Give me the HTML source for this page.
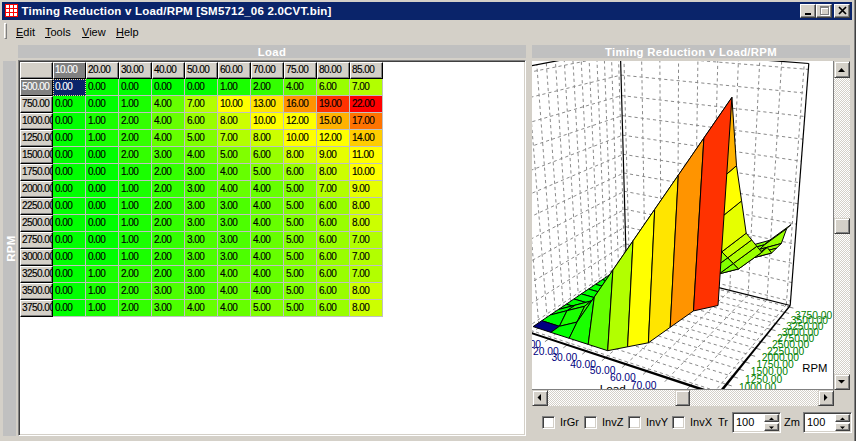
<!DOCTYPE html>
<html lang="en"><head><meta charset="utf-8"><title>Timing Reduction v Load/RPM</title>
<style>
html,body{margin:0;padding:0;background:#fff;}
body{width:857px;height:444px;overflow:hidden;position:relative;font-family:"Liberation Sans",sans-serif;font-size:11px;color:#000;}
#win{position:absolute;left:0;top:0;width:855px;height:441px;background:#d4d0c8;border-right:1px solid #404040;box-shadow:inset -1px 0 0 #808080;}
#win div{position:absolute;box-sizing:border-box;}
#title{left:2px;top:2px;width:850px;height:18px;background:#0a246a;color:#fff;font-weight:bold;}
#ticon{position:absolute;left:3px;top:2px;}
#ttext{position:absolute;left:19.5px;top:3px;font-size:11.5px;letter-spacing:0.2px;line-height:13px;white-space:nowrap;}
.cb{top:2px;width:16px;height:14px;background:#d4d0c8;border:1px solid;border-color:#fff #404040 #404040 #fff;box-shadow:inset -1px -1px 0 #808080;}
.cb svg{position:absolute;left:2px;top:1px;}
#grip{left:4px;top:23px;width:3px;height:16px;border:1px solid;border-color:#fff #808080 #808080 #fff;}
.mi{top:25px;height:14px;line-height:14px;font-size:11px;white-space:nowrap;}
.bar{background:#c0c0c0;color:#fff;font-weight:bold;font-size:11.3px;letter-spacing:0.33px;line-height:15px;text-align:center;overflow:hidden;}
#rpmbar{left:3px;top:61px;width:13px;height:375px;background:#c0c0c0;}
#rpmbar span{position:absolute;left:-7px;top:181px;width:31px;height:13px;line-height:13px;text-align:center;color:#fff;font-weight:bold;font-size:11.5px;letter-spacing:0.3px;transform:rotate(-90deg);}
#grid{left:18px;top:60px;width:508px;height:376px;background:#fff;border:1px solid;border-color:#808080 #fff #fff #808080;box-shadow:inset 1px 1px 0 #404040,inset -1px -1px 0 #d4d0c8;}
#grid div{font-size:10px;letter-spacing:-0.55px;line-height:15px;-webkit-text-stroke:0.15px;white-space:nowrap;overflow:hidden;}
#grid .fx{margin:1px 0 0 1px;width:33px;height:17px;background:#d4d0c8;border:1px solid;border-color:#fff #000 #000 #fff;box-shadow:inset -1px -1px 0 #808080;padding-left:1px;line-height:13px;}
#grid .fx.sel{background:#808080;color:#fff;}
#grid .c{margin:1px 0 0 1px;width:33px;height:17px;border-right:1px solid #c0c0c0;border-bottom:1px solid #c0c0c0;padding-left:2px;}
#grid .c.cur{background:#0a246a;color:#fff;border:1px dotted #f5db95;padding-left:1px;line-height:13px;}
#chart{left:532px;top:61px;width:302px;height:329px;background:#fff;overflow:hidden;border-right:1px solid #808080;border-bottom:1px solid #808080;}
.sb{background-color:#eae8e3;background-image:linear-gradient(45deg,#fff 25%,transparent 25%,transparent 75%,#fff 75%),linear-gradient(45deg,#fff 25%,#d4d0c8 25%,#d4d0c8 75%,#fff 75%);background-size:2px 2px;background-position:0 0,1px 1px;}
#vsb{left:834px;top:61px;width:16px;height:329px;}
#hsb{left:532px;top:390px;width:302px;height:16px;}
.btn{width:16px;height:16px;background:#d4d0c8;border:1px solid;border-color:#d4d0c8 #404040 #404040 #d4d0c8;box-shadow:inset 1px 1px 0 #fff,inset -1px -1px 0 #808080;}
.btn svg{position:absolute;left:-1px;top:-1px;}
.chk{top:416px;width:13px;height:13px;background:#fff;border:1px solid;border-color:#808080 #fff #fff #808080;box-shadow:inset 1px 1px 0 #404040,inset -1px -1px 0 #d4d0c8;}
.lab{top:415px;height:14px;line-height:14px;font-size:11px;white-space:nowrap;}
.spin{top:412px;width:49px;height:21px;background:#fff;border:1px solid;border-color:#808080 #fff #fff #808080;box-shadow:inset 1px 1px 0 #404040,inset -1px -1px 0 #d4d0c8;}
.spin span{position:absolute;left:3px;top:3px;line-height:13px;font-size:11px;}
.sbt{left:31px;margin-top:1px;width:15px;height:8px;background:#d4d0c8;border:1px solid;border-color:#fff #404040 #404040 #fff;box-shadow:inset -1px -1px 0 #808080;}
.sbt svg{position:absolute;left:1px;top:1px;}
</style></head>
<body>
<div id="win">
<div id="title"><svg id="ticon" width="13" height="13" viewBox="0 0 13 13"><rect width="13" height="13" fill="#f00"/><g fill="#fff"><rect x="1" y="1" width="3" height="3"/><rect x="5" y="1" width="3" height="3"/><rect x="9" y="1" width="3" height="3"/><rect x="1" y="5" width="3" height="3"/><rect x="5" y="5" width="3" height="3"/><rect x="9" y="5" width="3" height="3"/><rect x="1" y="9" width="3" height="3"/><rect x="5" y="9" width="3" height="3"/><rect x="9" y="9" width="3" height="3"/></g></svg><span id="ttext">Timing Reduction v Load/RPM [SM5712_06 2.0CVT.bin]</span><div class="cb" style="left:798px"><svg width="12" height="10"><rect x="2" y="7" width="6" height="2" fill="#000"/></svg></div><div class="cb" style="left:814px"><svg width="12" height="10"><rect x="2.5" y="1.5" width="8" height="8" fill="none" stroke="#fff"/><rect x="2" y="1" width="9" height="2" fill="#fff"/><rect x="1.5" y="0.5" width="8" height="8" fill="none" stroke="#808080"/><rect x="1" y="0" width="9" height="2" fill="#808080"/></svg></div><div class="cb" style="left:832px"><svg width="12" height="10"><path d="M2 1 L9 8 M9 1 L2 8" stroke="#000" stroke-width="1.7" fill="none"/></svg></div></div>
<div id="grip"></div>
<div class="mi" style="left:16px"><u>E</u>dit</div><div class="mi" style="left:45px"><u>T</u>ools</div><div class="mi" style="left:82px"><u>V</u>iew</div><div class="mi" style="left:116px"><u>H</u>elp</div>
<div class="bar" style="left:18px;top:45px;width:508px;height:13px">Load</div>
<div class="bar" style="left:532px;top:45px;width:318px;height:13px">Timing Reduction v Load/RPM</div>
<div id="rpmbar"><span>RPM</span></div>
<div id="grid">
<div class="fx" style="left:0;top:0"></div><div class="fx sel" style="left:33px;top:0">10.00</div><div class="fx" style="left:66px;top:0">20.00</div><div class="fx" style="left:99px;top:0">30.00</div><div class="fx" style="left:132px;top:0">40.00</div><div class="fx" style="left:165px;top:0">50.00</div><div class="fx" style="left:198px;top:0">60.00</div><div class="fx" style="left:231px;top:0">70.00</div><div class="fx" style="left:264px;top:0">75.00</div><div class="fx" style="left:297px;top:0">80.00</div><div class="fx" style="left:330px;top:0">85.00</div>
<div class="fx sel" style="left:0;top:17px">500.00</div><div class="c cur" style="left:33px;top:17px">0.00</div><div class="c" style="left:66px;top:17px;background:#00ff00">0.00</div><div class="c" style="left:99px;top:17px;background:#00ff00">0.00</div><div class="c" style="left:132px;top:17px;background:#00ff00">0.00</div><div class="c" style="left:165px;top:17px;background:#00ff00">0.00</div><div class="c" style="left:198px;top:17px;background:#1aff00">1.00</div><div class="c" style="left:231px;top:17px;background:#33ff00">2.00</div><div class="c" style="left:264px;top:17px;background:#66ff00">4.00</div><div class="c" style="left:297px;top:17px;background:#99ff00">6.00</div><div class="c" style="left:330px;top:17px;background:#b2ff00">7.00</div>
<div class="fx" style="left:0;top:34px">750.00</div><div class="c" style="left:33px;top:34px;background:#00ff00">0.00</div><div class="c" style="left:66px;top:34px;background:#00ff00">0.00</div><div class="c" style="left:99px;top:34px;background:#1aff00">1.00</div><div class="c" style="left:132px;top:34px;background:#66ff00">4.00</div><div class="c" style="left:165px;top:34px;background:#b2ff00">7.00</div><div class="c" style="left:198px;top:34px;background:#ffff00">10.00</div><div class="c" style="left:231px;top:34px;background:#ffe500">13.00</div><div class="c" style="left:264px;top:34px;background:#ff9400">16.00</div><div class="c" style="left:297px;top:34px;background:#ff3200">19.00</div><div class="c" style="left:330px;top:34px;background:#ff0000">22.00</div>
<div class="fx" style="left:0;top:51px">1000.00</div><div class="c" style="left:33px;top:51px;background:#00ff00">0.00</div><div class="c" style="left:66px;top:51px;background:#1aff00">1.00</div><div class="c" style="left:99px;top:51px;background:#33ff00">2.00</div><div class="c" style="left:132px;top:51px;background:#66ff00">4.00</div><div class="c" style="left:165px;top:51px;background:#99ff00">6.00</div><div class="c" style="left:198px;top:51px;background:#ccff00">8.00</div><div class="c" style="left:231px;top:51px;background:#ffff00">10.00</div><div class="c" style="left:264px;top:51px;background:#ffff00">12.00</div><div class="c" style="left:297px;top:51px;background:#ffb200">15.00</div><div class="c" style="left:330px;top:51px;background:#ff7300">17.00</div>
<div class="fx" style="left:0;top:68px">1250.00</div><div class="c" style="left:33px;top:68px;background:#00ff00">0.00</div><div class="c" style="left:66px;top:68px;background:#1aff00">1.00</div><div class="c" style="left:99px;top:68px;background:#33ff00">2.00</div><div class="c" style="left:132px;top:68px;background:#66ff00">4.00</div><div class="c" style="left:165px;top:68px;background:#80ff00">5.00</div><div class="c" style="left:198px;top:68px;background:#b2ff00">7.00</div><div class="c" style="left:231px;top:68px;background:#ccff00">8.00</div><div class="c" style="left:264px;top:68px;background:#ffff00">10.00</div><div class="c" style="left:297px;top:68px;background:#ffff00">12.00</div><div class="c" style="left:330px;top:68px;background:#ffcc00">14.00</div>
<div class="fx" style="left:0;top:85px">1500.00</div><div class="c" style="left:33px;top:85px;background:#00ff00">0.00</div><div class="c" style="left:66px;top:85px;background:#00ff00">0.00</div><div class="c" style="left:99px;top:85px;background:#33ff00">2.00</div><div class="c" style="left:132px;top:85px;background:#4cff00">3.00</div><div class="c" style="left:165px;top:85px;background:#66ff00">4.00</div><div class="c" style="left:198px;top:85px;background:#80ff00">5.00</div><div class="c" style="left:231px;top:85px;background:#99ff00">6.00</div><div class="c" style="left:264px;top:85px;background:#ccff00">8.00</div><div class="c" style="left:297px;top:85px;background:#e6ff00">9.00</div><div class="c" style="left:330px;top:85px;background:#ffff00">11.00</div>
<div class="fx" style="left:0;top:102px">1750.00</div><div class="c" style="left:33px;top:102px;background:#00ff00">0.00</div><div class="c" style="left:66px;top:102px;background:#00ff00">0.00</div><div class="c" style="left:99px;top:102px;background:#1aff00">1.00</div><div class="c" style="left:132px;top:102px;background:#33ff00">2.00</div><div class="c" style="left:165px;top:102px;background:#4cff00">3.00</div><div class="c" style="left:198px;top:102px;background:#66ff00">4.00</div><div class="c" style="left:231px;top:102px;background:#80ff00">5.00</div><div class="c" style="left:264px;top:102px;background:#99ff00">6.00</div><div class="c" style="left:297px;top:102px;background:#ccff00">8.00</div><div class="c" style="left:330px;top:102px;background:#ffff00">10.00</div>
<div class="fx" style="left:0;top:119px">2000.00</div><div class="c" style="left:33px;top:119px;background:#00ff00">0.00</div><div class="c" style="left:66px;top:119px;background:#00ff00">0.00</div><div class="c" style="left:99px;top:119px;background:#1aff00">1.00</div><div class="c" style="left:132px;top:119px;background:#33ff00">2.00</div><div class="c" style="left:165px;top:119px;background:#4cff00">3.00</div><div class="c" style="left:198px;top:119px;background:#66ff00">4.00</div><div class="c" style="left:231px;top:119px;background:#66ff00">4.00</div><div class="c" style="left:264px;top:119px;background:#80ff00">5.00</div><div class="c" style="left:297px;top:119px;background:#b2ff00">7.00</div><div class="c" style="left:330px;top:119px;background:#e6ff00">9.00</div>
<div class="fx" style="left:0;top:136px">2250.00</div><div class="c" style="left:33px;top:136px;background:#00ff00">0.00</div><div class="c" style="left:66px;top:136px;background:#00ff00">0.00</div><div class="c" style="left:99px;top:136px;background:#1aff00">1.00</div><div class="c" style="left:132px;top:136px;background:#33ff00">2.00</div><div class="c" style="left:165px;top:136px;background:#4cff00">3.00</div><div class="c" style="left:198px;top:136px;background:#4cff00">3.00</div><div class="c" style="left:231px;top:136px;background:#66ff00">4.00</div><div class="c" style="left:264px;top:136px;background:#80ff00">5.00</div><div class="c" style="left:297px;top:136px;background:#99ff00">6.00</div><div class="c" style="left:330px;top:136px;background:#ccff00">8.00</div>
<div class="fx" style="left:0;top:153px">2500.00</div><div class="c" style="left:33px;top:153px;background:#00ff00">0.00</div><div class="c" style="left:66px;top:153px;background:#00ff00">0.00</div><div class="c" style="left:99px;top:153px;background:#1aff00">1.00</div><div class="c" style="left:132px;top:153px;background:#33ff00">2.00</div><div class="c" style="left:165px;top:153px;background:#4cff00">3.00</div><div class="c" style="left:198px;top:153px;background:#4cff00">3.00</div><div class="c" style="left:231px;top:153px;background:#66ff00">4.00</div><div class="c" style="left:264px;top:153px;background:#80ff00">5.00</div><div class="c" style="left:297px;top:153px;background:#99ff00">6.00</div><div class="c" style="left:330px;top:153px;background:#ccff00">8.00</div>
<div class="fx" style="left:0;top:170px">2750.00</div><div class="c" style="left:33px;top:170px;background:#00ff00">0.00</div><div class="c" style="left:66px;top:170px;background:#00ff00">0.00</div><div class="c" style="left:99px;top:170px;background:#1aff00">1.00</div><div class="c" style="left:132px;top:170px;background:#33ff00">2.00</div><div class="c" style="left:165px;top:170px;background:#4cff00">3.00</div><div class="c" style="left:198px;top:170px;background:#4cff00">3.00</div><div class="c" style="left:231px;top:170px;background:#66ff00">4.00</div><div class="c" style="left:264px;top:170px;background:#80ff00">5.00</div><div class="c" style="left:297px;top:170px;background:#99ff00">6.00</div><div class="c" style="left:330px;top:170px;background:#b2ff00">7.00</div>
<div class="fx" style="left:0;top:187px">3000.00</div><div class="c" style="left:33px;top:187px;background:#00ff00">0.00</div><div class="c" style="left:66px;top:187px;background:#00ff00">0.00</div><div class="c" style="left:99px;top:187px;background:#1aff00">1.00</div><div class="c" style="left:132px;top:187px;background:#33ff00">2.00</div><div class="c" style="left:165px;top:187px;background:#4cff00">3.00</div><div class="c" style="left:198px;top:187px;background:#4cff00">3.00</div><div class="c" style="left:231px;top:187px;background:#66ff00">4.00</div><div class="c" style="left:264px;top:187px;background:#80ff00">5.00</div><div class="c" style="left:297px;top:187px;background:#99ff00">6.00</div><div class="c" style="left:330px;top:187px;background:#b2ff00">7.00</div>
<div class="fx" style="left:0;top:204px">3250.00</div><div class="c" style="left:33px;top:204px;background:#00ff00">0.00</div><div class="c" style="left:66px;top:204px;background:#1aff00">1.00</div><div class="c" style="left:99px;top:204px;background:#33ff00">2.00</div><div class="c" style="left:132px;top:204px;background:#33ff00">2.00</div><div class="c" style="left:165px;top:204px;background:#4cff00">3.00</div><div class="c" style="left:198px;top:204px;background:#66ff00">4.00</div><div class="c" style="left:231px;top:204px;background:#66ff00">4.00</div><div class="c" style="left:264px;top:204px;background:#80ff00">5.00</div><div class="c" style="left:297px;top:204px;background:#99ff00">6.00</div><div class="c" style="left:330px;top:204px;background:#b2ff00">7.00</div>
<div class="fx" style="left:0;top:221px">3500.00</div><div class="c" style="left:33px;top:221px;background:#00ff00">0.00</div><div class="c" style="left:66px;top:221px;background:#1aff00">1.00</div><div class="c" style="left:99px;top:221px;background:#33ff00">2.00</div><div class="c" style="left:132px;top:221px;background:#4cff00">3.00</div><div class="c" style="left:165px;top:221px;background:#4cff00">3.00</div><div class="c" style="left:198px;top:221px;background:#66ff00">4.00</div><div class="c" style="left:231px;top:221px;background:#66ff00">4.00</div><div class="c" style="left:264px;top:221px;background:#80ff00">5.00</div><div class="c" style="left:297px;top:221px;background:#99ff00">6.00</div><div class="c" style="left:330px;top:221px;background:#ccff00">8.00</div>
<div class="fx" style="left:0;top:238px">3750.00</div><div class="c" style="left:33px;top:238px;background:#00ff00">0.00</div><div class="c" style="left:66px;top:238px;background:#1aff00">1.00</div><div class="c" style="left:99px;top:238px;background:#33ff00">2.00</div><div class="c" style="left:132px;top:238px;background:#4cff00">3.00</div><div class="c" style="left:165px;top:238px;background:#66ff00">4.00</div><div class="c" style="left:198px;top:238px;background:#66ff00">4.00</div><div class="c" style="left:231px;top:238px;background:#80ff00">5.00</div><div class="c" style="left:264px;top:238px;background:#80ff00">5.00</div><div class="c" style="left:297px;top:238px;background:#99ff00">6.00</div><div class="c" style="left:330px;top:238px;background:#ccff00">8.00</div>
</div>
<div id="chart">
<svg width="302" height="329" viewBox="0 0 302 329" style="position:absolute;left:0;top:0">
<g stroke="#8a8a8a" stroke-width="1" stroke-dasharray="3.2 3" fill="none">
<line x1="-1.8" y1="269.2" x2="-25.8" y2="9.3"/>
<line x1="6.8" y1="263.3" x2="-15.2" y2="7.4"/>
<line x1="15.2" y1="257.5" x2="-5.0" y2="5.5"/>
<line x1="23.4" y1="252.0" x2="4.8" y2="3.6"/>
<line x1="31.3" y1="246.6" x2="14.3" y2="1.9"/>
<line x1="38.9" y1="241.4" x2="23.4" y2="0.1"/>
<line x1="46.4" y1="236.3" x2="32.2" y2="-1.5"/>
<line x1="53.6" y1="231.4" x2="40.8" y2="-3.1"/>
<line x1="60.5" y1="226.7" x2="49.0" y2="-4.6"/>
<line x1="67.3" y1="222.0" x2="56.9" y2="-6.1"/>
<line x1="73.9" y1="217.6" x2="64.7" y2="-7.5"/>
<line x1="80.3" y1="213.2" x2="72.1" y2="-8.9"/>
<line x1="86.6" y1="208.9" x2="79.3" y2="-10.3"/>
<line x1="92.6" y1="204.8" x2="86.3" y2="-11.6"/>
<line x1="-4.8" y1="266.2" x2="94.2" y2="199.7"/>
<line x1="-6.7" y1="246.4" x2="93.7" y2="182.9"/>
<line x1="-8.6" y1="226.1" x2="93.3" y2="165.7"/>
<line x1="-10.5" y1="205.3" x2="92.8" y2="148.2"/>
<line x1="-12.5" y1="183.9" x2="92.3" y2="130.3"/>
<line x1="-14.6" y1="161.9" x2="91.8" y2="112.0"/>
<line x1="-16.7" y1="139.3" x2="91.2" y2="93.3"/>
<line x1="-18.9" y1="116.1" x2="90.7" y2="74.2"/>
<line x1="-21.2" y1="92.2" x2="90.2" y2="54.6"/>
<line x1="-23.5" y1="67.6" x2="89.6" y2="34.6"/>
<line x1="-25.8" y1="42.3" x2="89.0" y2="14.1"/>
<line x1="-28.3" y1="16.3" x2="88.4" y2="-6.8"/>
<line x1="97.4" y1="204.4" x2="91.7" y2="-11.7"/>
<line x1="113.1" y1="208.3" x2="109.5" y2="-10.3"/>
<line x1="129.1" y1="212.3" x2="127.8" y2="-8.9"/>
<line x1="145.6" y1="216.5" x2="146.6" y2="-7.5"/>
<line x1="162.6" y1="220.7" x2="166.0" y2="-6.0"/>
<line x1="180.0" y1="225.0" x2="185.9" y2="-4.4"/>
<line x1="197.8" y1="229.5" x2="206.5" y2="-2.9"/>
<line x1="216.1" y1="234.0" x2="227.8" y2="-1.2"/>
<line x1="235.0" y1="238.7" x2="249.7" y2="0.4"/>
<line x1="254.3" y1="243.6" x2="272.3" y2="2.2"/>
<line x1="94.2" y1="199.7" x2="258.5" y2="240.1"/>
<line x1="93.7" y1="182.9" x2="260.0" y2="221.6"/>
<line x1="93.3" y1="165.7" x2="261.4" y2="202.6"/>
<line x1="92.8" y1="148.2" x2="262.9" y2="183.1"/>
<line x1="92.3" y1="130.3" x2="264.5" y2="163.2"/>
<line x1="91.8" y1="112.0" x2="266.0" y2="142.7"/>
<line x1="91.2" y1="93.3" x2="267.6" y2="121.7"/>
<line x1="90.7" y1="74.2" x2="269.3" y2="100.2"/>
<line x1="90.2" y1="54.6" x2="271.0" y2="78.2"/>
<line x1="89.6" y1="34.6" x2="272.7" y2="55.5"/>
<line x1="89.0" y1="14.1" x2="274.5" y2="32.2"/>
<line x1="88.4" y1="-6.8" x2="276.4" y2="8.4"/>
<line x1="-0.9" y1="272.0" x2="97.4" y2="204.4"/>
<line x1="16.8" y1="277.9" x2="113.1" y2="208.3"/>
<line x1="35.2" y1="283.9" x2="129.1" y2="212.3"/>
<line x1="54.1" y1="290.1" x2="145.6" y2="216.5"/>
<line x1="73.6" y1="296.6" x2="162.6" y2="220.7"/>
<line x1="93.8" y1="303.2" x2="180.0" y2="225.0"/>
<line x1="114.6" y1="310.1" x2="197.8" y2="229.5"/>
<line x1="136.2" y1="317.2" x2="216.1" y2="234.0"/>
<line x1="158.5" y1="324.5" x2="235.0" y2="238.7"/>
<line x1="181.5" y1="332.1" x2="254.3" y2="243.6"/>
<line x1="-1.8" y1="269.2" x2="188.0" y2="331.3"/>
<line x1="6.8" y1="263.3" x2="194.6" y2="323.3"/>
<line x1="15.2" y1="257.5" x2="200.8" y2="315.5"/>
<line x1="23.4" y1="252.0" x2="206.9" y2="308.1"/>
<line x1="31.3" y1="246.6" x2="212.7" y2="300.8"/>
<line x1="38.9" y1="241.4" x2="218.3" y2="293.9"/>
<line x1="46.4" y1="236.3" x2="223.7" y2="287.2"/>
<line x1="53.6" y1="231.4" x2="229.0" y2="280.7"/>
<line x1="60.5" y1="226.7" x2="234.0" y2="274.4"/>
<line x1="67.3" y1="222.0" x2="238.9" y2="268.4"/>
<line x1="73.9" y1="217.6" x2="243.7" y2="262.5"/>
<line x1="80.3" y1="213.2" x2="248.2" y2="256.8"/>
<line x1="86.6" y1="208.9" x2="252.7" y2="251.3"/>
<line x1="92.6" y1="204.8" x2="257.0" y2="246.0"/>
</g>
<g stroke="#000" stroke-width="1.2" fill="none">
<line x1="94.3" y1="203.7" x2="88.3" y2="-11.9"/>
<line x1="258.2" y1="244.5" x2="276.8" y2="2.5"/>
<line x1="-28.9" y1="9.9" x2="88.3" y2="-11.9"/>
<line x1="88.3" y1="-11.9" x2="276.8" y2="2.5"/>
<line x1="94.3" y1="203.7" x2="258.2" y2="244.5"/>
</g>
<g stroke="#000" stroke-width="1" stroke-linejoin="round">
<polygon points="89.5,205.7 105.2,201.1 111.2,197.0 95.6,201.6" fill="#00ff00"/>
<polygon points="105.2,201.1 121.6,196.4 127.4,192.2 111.2,197.0" fill="#1aff00"/>
<polygon points="121.6,196.4 138.5,191.4 144.2,187.3 127.4,192.2" fill="#33ff00"/>
<polygon points="138.5,191.4 156.0,195.5 161.6,182.2 144.2,187.3" fill="#4cff00"/>
<polygon points="156.0,195.5 174.2,190.4 179.5,186.1 161.6,182.2" fill="#66ff00"/>
<polygon points="174.2,190.4 192.8,194.6 198.2,180.8 179.5,186.1" fill="#66ff00"/>
<polygon points="192.8,194.6 212.3,189.3 217.3,184.9 198.2,180.8" fill="#80ff00"/>
<polygon points="212.3,189.3 232.7,183.7 237.4,179.4 217.3,184.9" fill="#80ff00"/>
<polygon points="232.7,183.7 254.6,167.8 259.1,163.6 237.4,179.4" fill="#99ff00"/>
<polygon points="83.3,209.9 99.1,205.3 105.2,201.1 89.5,205.7" fill="#00ff00"/>
<polygon points="99.1,205.3 115.6,200.6 121.6,196.4 105.2,201.1" fill="#1aff00"/>
<polygon points="115.6,200.6 132.7,204.8 138.5,191.4 121.6,196.4" fill="#33ff00"/>
<polygon points="132.7,204.8 150.3,199.9 156.0,195.5 138.5,191.4" fill="#4cff00"/>
<polygon points="150.3,199.9 168.7,194.8 174.2,190.4 156.0,195.5" fill="#4cff00"/>
<polygon points="168.7,194.8 187.5,199.1 192.8,194.6 174.2,190.4" fill="#66ff00"/>
<polygon points="187.5,199.1 207.2,193.8 212.3,189.3 192.8,194.6" fill="#66ff00"/>
<polygon points="207.2,193.8 227.8,188.3 232.7,183.7 212.3,189.3" fill="#80ff00"/>
<polygon points="227.8,188.3 249.3,182.5 254.6,167.8 232.7,183.7" fill="#99ff00"/>
<polygon points="76.9,214.2 93.1,218.5 99.1,205.3 83.3,209.9" fill="#00ff00"/>
<polygon points="93.1,218.5 109.6,214.0 115.6,200.6 99.1,205.3" fill="#1aff00"/>
<polygon points="109.6,214.0 126.7,209.3 132.7,204.8 115.6,200.6" fill="#33ff00"/>
<polygon points="126.7,209.3 144.5,204.4 150.3,199.9 132.7,204.8" fill="#33ff00"/>
<polygon points="144.5,204.4 162.8,208.8 168.7,194.8 150.3,199.9" fill="#4cff00"/>
<polygon points="162.8,208.8 182.0,203.7 187.5,199.1 168.7,194.8" fill="#66ff00"/>
<polygon points="182.0,203.7 202.0,198.5 207.2,193.8 187.5,199.1" fill="#66ff00"/>
<polygon points="202.0,198.5 222.8,192.9 227.8,188.3 207.2,193.8" fill="#80ff00"/>
<polygon points="222.8,192.9 244.5,187.2 249.3,182.5 227.8,188.3" fill="#99ff00"/>
<polygon points="70.3,218.7 86.7,223.1 93.1,218.5 76.9,214.2" fill="#00ff00"/>
<polygon points="86.7,223.1 103.2,218.6 109.6,214.0 93.1,218.5" fill="#00ff00"/>
<polygon points="103.2,218.6 120.5,213.9 126.7,209.3 109.6,214.0" fill="#1aff00"/>
<polygon points="120.5,213.9 138.4,209.0 144.5,204.4 126.7,209.3" fill="#33ff00"/>
<polygon points="138.4,209.0 157.0,213.6 162.8,208.8 144.5,204.4" fill="#4cff00"/>
<polygon points="157.0,213.6 176.4,208.5 182.0,203.7 162.8,208.8" fill="#4cff00"/>
<polygon points="176.4,208.5 196.5,203.3 202.0,198.5 182.0,203.7" fill="#66ff00"/>
<polygon points="196.5,203.3 217.6,197.8 222.8,192.9 202.0,198.5" fill="#80ff00"/>
<polygon points="217.6,197.8 239.6,192.0 244.5,187.2 222.8,192.9" fill="#99ff00"/>
<polygon points="63.5,223.3 80.0,227.8 86.7,223.1 70.3,218.7" fill="#00ff00"/>
<polygon points="80.0,227.8 96.7,223.3 103.2,218.6 86.7,223.1" fill="#00ff00"/>
<polygon points="96.7,223.3 114.1,218.7 120.5,213.9 103.2,218.6" fill="#1aff00"/>
<polygon points="114.1,218.7 132.2,213.8 138.4,209.0 120.5,213.9" fill="#33ff00"/>
<polygon points="132.2,213.8 151.0,218.5 157.0,213.6 138.4,209.0" fill="#4cff00"/>
<polygon points="151.0,218.5 170.5,213.5 176.4,208.5 157.0,213.6" fill="#4cff00"/>
<polygon points="170.5,213.5 190.9,208.3 196.5,203.3 176.4,208.5" fill="#66ff00"/>
<polygon points="190.9,208.3 212.2,202.8 217.6,197.8 196.5,203.3" fill="#80ff00"/>
<polygon points="212.2,202.8 235.1,186.3 239.6,192.0 217.6,197.8" fill="#99ff00"/>
<polygon points="56.5,228.1 73.2,232.7 80.0,227.8 63.5,223.3" fill="#00ff00"/>
<polygon points="73.2,232.7 90.0,228.2 96.7,223.3 80.0,227.8" fill="#00ff00"/>
<polygon points="90.0,228.2 107.6,223.6 114.1,218.7 96.7,223.3" fill="#1aff00"/>
<polygon points="107.6,223.6 125.8,218.8 132.2,213.8 114.1,218.7" fill="#33ff00"/>
<polygon points="125.8,218.8 144.8,223.6 151.0,218.5 132.2,213.8" fill="#4cff00"/>
<polygon points="144.8,223.6 164.5,218.6 170.5,213.5 151.0,218.5" fill="#4cff00"/>
<polygon points="164.5,218.6 185.1,213.4 190.9,208.3 170.5,213.5" fill="#66ff00"/>
<polygon points="185.1,213.4 206.6,207.9 212.2,202.8 190.9,208.3" fill="#80ff00"/>
<polygon points="206.6,207.9 229.8,191.3 235.1,186.3 212.2,202.8" fill="#99ff00"/>
<polygon points="49.3,232.9 66.2,237.7 73.2,232.7 56.5,228.1" fill="#00ff00"/>
<polygon points="66.2,237.7 83.1,233.3 90.0,228.2 73.2,232.7" fill="#00ff00"/>
<polygon points="83.1,233.3 100.8,228.7 107.6,223.6 90.0,228.2" fill="#1aff00"/>
<polygon points="100.8,228.7 119.2,223.9 125.8,218.8 107.6,223.6" fill="#33ff00"/>
<polygon points="119.2,223.9 138.4,218.9 144.8,223.6 125.8,218.8" fill="#4cff00"/>
<polygon points="138.4,218.9 158.3,223.9 164.5,218.6 144.8,223.6" fill="#4cff00"/>
<polygon points="158.3,223.9 179.1,218.7 185.1,213.4 164.5,218.6" fill="#66ff00"/>
<polygon points="179.1,218.7 201.3,202.5 206.6,207.9 185.1,213.4" fill="#80ff00"/>
<polygon points="201.3,202.5 224.8,185.3 229.8,191.3 206.6,207.9" fill="#99ff00"/>
<polygon points="41.9,238.0 58.9,242.9 66.2,237.7 49.3,232.9" fill="#00ff00"/>
<polygon points="58.9,242.9 76.0,238.5 83.1,233.3 66.2,237.7" fill="#00ff00"/>
<polygon points="76.0,238.5 93.8,233.9 100.8,228.7 83.1,233.3" fill="#1aff00"/>
<polygon points="93.8,233.9 112.3,229.2 119.2,223.9 100.8,228.7" fill="#33ff00"/>
<polygon points="112.3,229.2 131.7,224.2 138.4,218.9 119.2,223.9" fill="#4cff00"/>
<polygon points="131.7,224.2 151.9,219.0 158.3,223.9 138.4,218.9" fill="#66ff00"/>
<polygon points="151.9,219.0 173.1,213.6 179.1,218.7 158.3,223.9" fill="#66ff00"/>
<polygon points="173.1,213.6 195.7,196.8 201.3,202.5 179.1,218.7" fill="#80ff00"/>
<polygon points="195.7,196.8 219.7,178.9 224.8,185.3 201.3,202.5" fill="#b2ff00"/>
<polygon points="34.3,243.2 51.4,248.2 58.9,242.9 41.9,238.0" fill="#00ff00"/>
<polygon points="51.4,248.2 68.2,234.2 76.0,238.5 58.9,242.9" fill="#00ff00"/>
<polygon points="68.2,234.2 86.2,229.4 93.8,233.9 76.0,238.5" fill="#1aff00"/>
<polygon points="86.2,229.4 105.0,224.5 112.3,229.2 93.8,233.9" fill="#33ff00"/>
<polygon points="105.0,224.5 124.7,219.3 131.7,224.2 112.3,229.2" fill="#4cff00"/>
<polygon points="124.7,219.3 145.3,213.9 151.9,219.0 131.7,224.2" fill="#66ff00"/>
<polygon points="145.3,213.9 167.0,197.0 173.1,213.6 151.9,219.0" fill="#80ff00"/>
<polygon points="167.0,197.0 189.8,190.8 195.7,196.8 173.1,213.6" fill="#99ff00"/>
<polygon points="189.8,190.8 214.2,172.2 219.7,178.9 195.7,196.8" fill="#ccff00"/>
<polygon points="26.4,248.5 43.1,244.2 51.4,248.2 34.3,243.2" fill="#00ff00"/>
<polygon points="43.1,244.2 60.5,239.6 68.2,234.2 51.4,248.2" fill="#00ff00"/>
<polygon points="60.5,239.6 78.3,224.8 86.2,229.4 68.2,234.2" fill="#33ff00"/>
<polygon points="78.3,224.8 97.4,219.6 105.0,224.5 86.2,229.4" fill="#4cff00"/>
<polygon points="97.4,219.6 117.2,203.3 124.7,219.3 105.0,224.5" fill="#66ff00"/>
<polygon points="117.2,203.3 138.3,197.3 145.3,213.9 124.7,219.3" fill="#80ff00"/>
<polygon points="138.3,197.3 160.5,179.4 167.0,197.0 145.3,213.9" fill="#99ff00"/>
<polygon points="160.5,179.4 184.2,160.3 189.8,190.8 167.0,197.0" fill="#ccff00"/>
<polygon points="184.2,160.3 209.6,139.9 214.2,172.2 189.8,190.8" fill="#e6ff00"/>
<polygon points="18.2,254.0 35.0,249.7 43.1,244.2 26.4,248.5" fill="#00ff00"/>
<polygon points="35.0,249.7 52.6,245.3 60.5,239.6 43.1,244.2" fill="#1aff00"/>
<polygon points="52.6,245.3 70.4,230.3 78.3,224.8 60.5,239.6" fill="#33ff00"/>
<polygon points="70.4,230.3 89.4,214.4 97.4,219.6 78.3,224.8" fill="#66ff00"/>
<polygon points="89.4,214.4 109.4,197.5 117.2,203.3 97.4,219.6" fill="#80ff00"/>
<polygon points="109.4,197.5 130.8,179.6 138.3,197.3 117.2,203.3" fill="#b2ff00"/>
<polygon points="130.8,179.6 153.6,160.5 160.5,179.4 138.3,197.3" fill="#ccff00"/>
<polygon points="153.6,160.5 178.2,127.2 184.2,160.3 160.5,179.4" fill="#ffff00"/>
<polygon points="178.2,127.2 204.5,104.7 209.6,139.9 184.2,160.3" fill="#ffff00"/>
<polygon points="9.8,259.7 27.4,265.3 35.0,249.7 18.2,254.0" fill="#00ff00"/>
<polygon points="27.4,265.3 45.0,261.1 52.6,245.3 35.0,249.7" fill="#1aff00"/>
<polygon points="45.0,261.1 62.3,236.0 70.4,230.3 52.6,245.3" fill="#33ff00"/>
<polygon points="62.3,236.0 80.9,209.0 89.4,214.4 70.4,230.3" fill="#66ff00"/>
<polygon points="80.9,209.0 101.0,179.9 109.4,197.5 89.4,214.4" fill="#99ff00"/>
<polygon points="101.0,179.9 122.7,148.4 130.8,179.6 109.4,197.5" fill="#ccff00"/>
<polygon points="122.7,148.4 146.3,114.2 153.6,160.5 130.8,179.6" fill="#ffff00"/>
<polygon points="146.3,114.2 171.9,77.0 178.2,127.2 153.6,160.5" fill="#ffff00"/>
<polygon points="171.9,77.0 199.9,36.4 204.5,104.7 178.2,127.2" fill="#ffb200"/>
<polygon points="1.1,265.6 18.9,271.4 27.4,265.3 9.8,259.7" fill="#000080"/>
<polygon points="18.9,271.4 37.2,277.3 45.0,261.1 27.4,265.3" fill="#00ff00"/>
<polygon points="37.2,277.3 56.2,283.4 62.3,236.0 45.0,261.1" fill="#1aff00"/>
<polygon points="56.2,283.4 75.7,289.7 80.9,209.0 62.3,236.0" fill="#66ff00"/>
<polygon points="75.7,289.7 95.6,285.8 101.0,179.9 80.9,209.0" fill="#b2ff00"/>
<polygon points="95.6,285.8 116.4,281.8 122.7,148.4 101.0,179.9" fill="#ffff00"/>
<polygon points="116.4,281.8 138.2,266.3 146.3,114.2 122.7,148.4" fill="#ffe500"/>
<polygon points="138.2,266.3 161.5,249.9 171.9,77.0 146.3,114.2" fill="#ff9400"/>
<polygon points="161.5,249.9 186.0,244.5 199.9,36.4 171.9,77.0" fill="#ff3200"/>
</g>
<g stroke="#808080" stroke-width="1" fill="none">
<line x1="-0.9" y1="272.0" x2="-5.0" y2="274.8"/>
<line x1="16.8" y1="277.9" x2="12.9" y2="280.7"/>
<line x1="35.2" y1="283.9" x2="31.3" y2="286.9"/>
<line x1="54.1" y1="290.1" x2="50.3" y2="293.2"/>
<line x1="73.6" y1="296.6" x2="69.9" y2="299.7"/>
<line x1="93.8" y1="303.2" x2="90.2" y2="306.5"/>
<line x1="114.6" y1="310.1" x2="111.1" y2="313.5"/>
<line x1="136.2" y1="317.2" x2="132.8" y2="320.7"/>
<line x1="158.5" y1="324.5" x2="155.2" y2="328.1"/>
<line x1="181.5" y1="332.1" x2="178.5" y2="335.9"/>
<line x1="188.0" y1="331.3" x2="193.3" y2="333.0"/>
<line x1="194.6" y1="323.3" x2="199.7" y2="324.9"/>
<line x1="200.8" y1="315.5" x2="205.9" y2="317.1"/>
<line x1="206.9" y1="308.1" x2="211.8" y2="309.6"/>
<line x1="212.7" y1="300.8" x2="217.6" y2="302.3"/>
<line x1="218.3" y1="293.9" x2="223.1" y2="295.3"/>
<line x1="223.7" y1="287.2" x2="228.5" y2="288.6"/>
<line x1="229.0" y1="280.7" x2="233.7" y2="282.0"/>
<line x1="234.0" y1="274.4" x2="238.7" y2="275.7"/>
<line x1="238.9" y1="268.4" x2="243.5" y2="269.6"/>
<line x1="243.7" y1="262.5" x2="248.2" y2="263.7"/>
<line x1="248.2" y1="256.8" x2="252.7" y2="258.0"/>
<line x1="252.7" y1="251.3" x2="257.1" y2="252.5"/>
<line x1="257.0" y1="246.0" x2="261.4" y2="247.1"/>
</g>
<g fill="#000" stroke="none">
<polygon points="-4.7,271.8 185.8,334.9 186.6,332.4 -4.1,270.0"/>
<polygon points="187.2,334.5 258.7,244.9 257.7,244.1 185.1,332.8"/>
</g>
<g font-family="Liberation Sans, sans-serif" font-size="10.3px">
<g fill="#000080">
<text x="-16.7" y="287.4">10.00</text>
<text x="1.0" y="293.6">20.00</text>
<text x="19.4" y="300.0">30.00</text>
<text x="38.3" y="306.5">40.00</text>
<text x="57.8" y="313.3">50.00</text>
<text x="78.0" y="320.3">60.00</text>
<text x="98.8" y="327.5">70.00</text>
</g>
<g fill="#008000">
<text x="200.7" y="337.5">750.00</text>
<text x="206.9" y="329.6">1000.00</text>
<text x="213.0" y="321.9">1250.00</text>
<text x="218.8" y="314.4">1500.00</text>
<text x="224.4" y="307.2">1750.00</text>
<text x="229.8" y="300.3">2000.00</text>
<text x="235.1" y="293.6">2250.00</text>
<text x="240.1" y="287.1">2500.00</text>
<text x="245.0" y="280.8">2750.00</text>
<text x="249.8" y="274.7">3000.00</text>
<text x="254.3" y="268.8">3250.00</text>
<text x="258.8" y="263.1">3500.00</text>
<text x="263.1" y="257.5">3750.00</text>
</g>
<text x="67.7" y="331.6" fill="#000" font-size="11.8px">Load</text>
<text x="270.3" y="311.0" fill="#000" font-size="11.3px">RPM</text>
</g>
</svg>
</div>
<div class="sb" id="vsb"><div class="btn" style="left:0;top:0;height:17px"><svg width="16" height="17"><path d="M4 11 L11 11 L7.5 7 Z" fill="#000"/></svg></div><div class="btn" style="left:0;top:157px;height:16px"></div><div class="btn" style="left:0;top:313px"><svg width="16" height="16"><path d="M4 6 L11 6 L7.5 9.5 Z" fill="#000"/></svg></div></div>
<div class="sb" id="hsb"><div class="btn" style="left:0;top:0"><svg width="16" height="16"><path d="M9 4 L9 11 L5.5 7.5 Z" fill="#000"/></svg></div><div class="btn" style="left:143px;top:0;width:15px"></div><div class="btn" style="left:286px;top:0"><svg width="16" height="16"><path d="M6 4 L6 11 L9.5 7.5 Z" fill="#000"/></svg></div></div>
<div class="chk" style="left:542px"></div><div class="lab" style="left:560px">IrGr</div><div class="chk" style="left:584px"></div><div class="lab" style="left:602px">InvZ</div><div class="chk" style="left:628px"></div><div class="lab" style="left:646px">InvY</div><div class="chk" style="left:672px"></div><div class="lab" style="left:690px">InvX</div>
<div class="lab" style="left:718px">Tr</div><div class="lab" style="left:784px">Zm</div>
<div class="spin" style="left:732px"><span>100</span><div class="sbt" style="top:0"><svg width="10" height="5"><path d="M3 4 L8 4 L5.5 1.5 Z" fill="#000"/></svg></div><div class="sbt" style="top:9px"><svg width="10" height="5"><path d="M3 1.5 L8 1.5 L5.5 4 Z" fill="#000"/></svg></div></div><div class="spin" style="left:803px"><span>100</span><div class="sbt" style="top:0"><svg width="10" height="5"><path d="M3 4 L8 4 L5.5 1.5 Z" fill="#000"/></svg></div><div class="sbt" style="top:9px"><svg width="10" height="5"><path d="M3 1.5 L8 1.5 L5.5 4 Z" fill="#000"/></svg></div></div>
</div>
</body></html>
